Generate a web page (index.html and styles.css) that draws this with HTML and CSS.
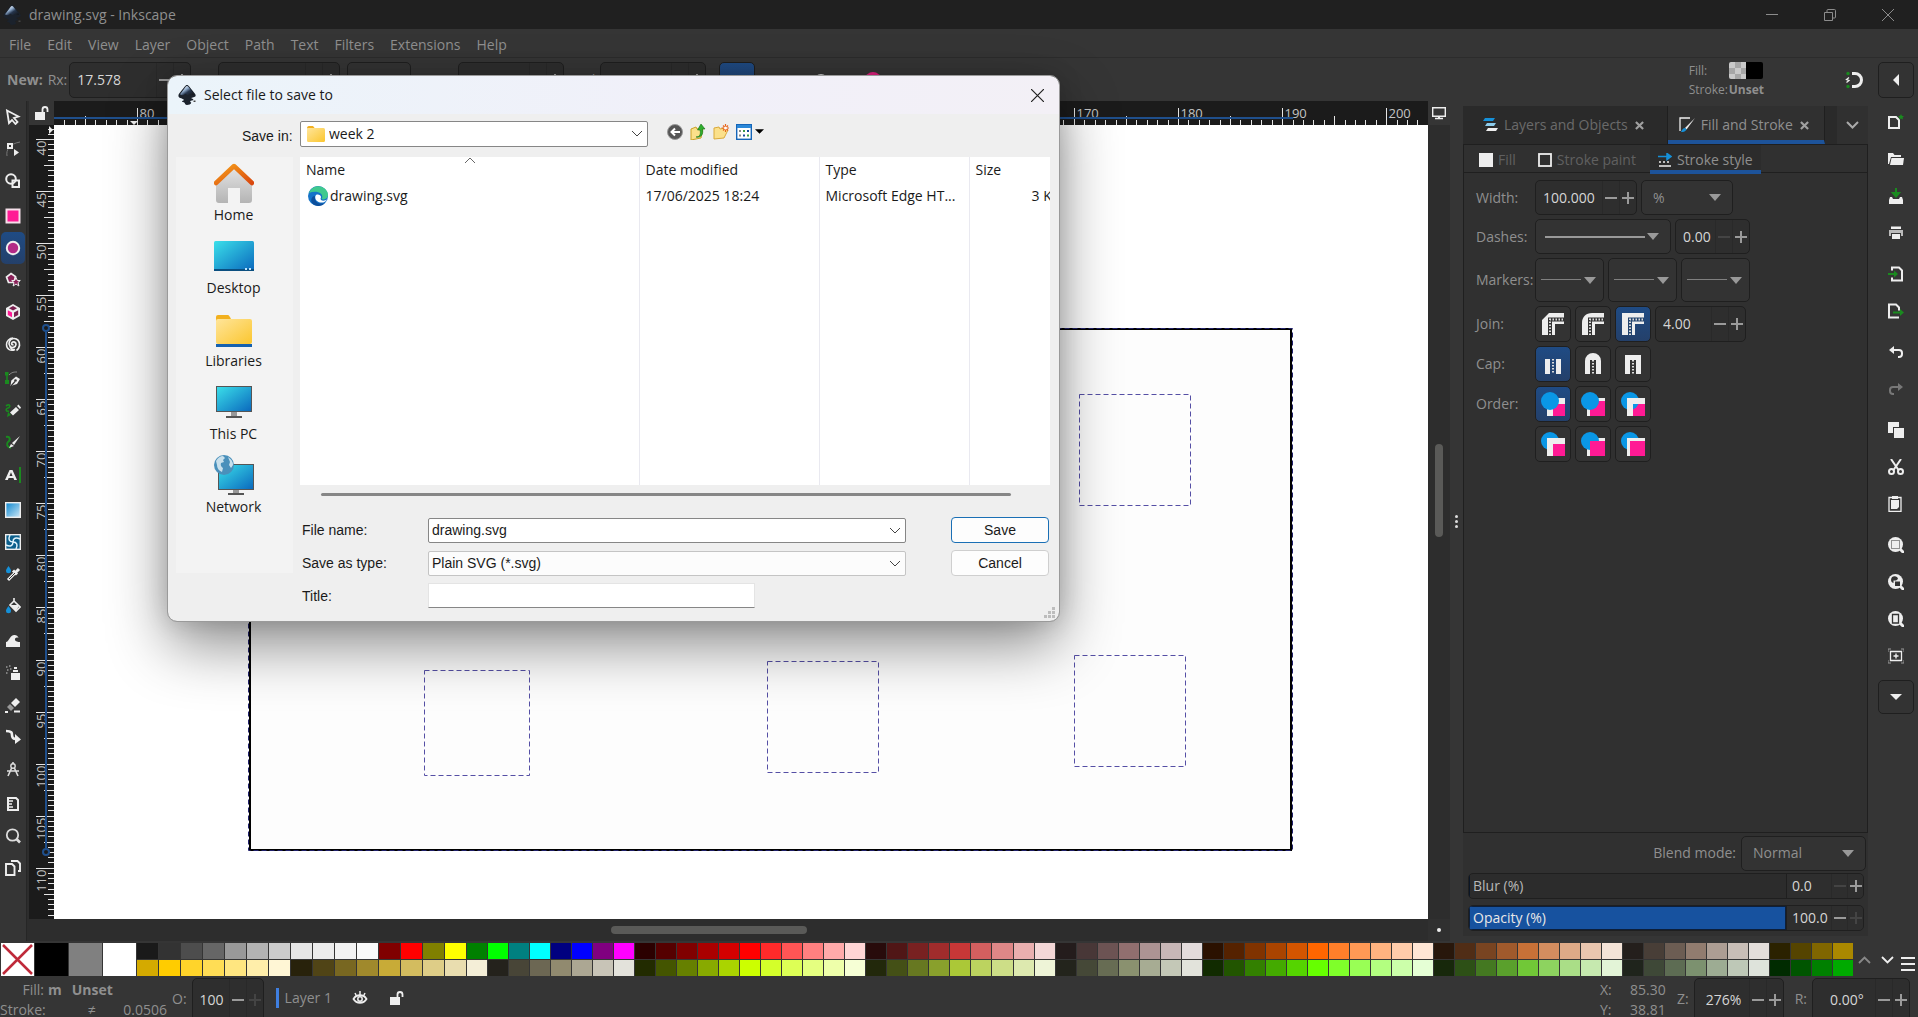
FILE: index.html
```html
<!DOCTYPE html>
<html lang="en">
<head>
<meta charset="utf-8">
<title>drawing.svg - Inkscape</title>
<link rel="stylesheet" href="styles.css">
</head>
<body>
<svg class="defs" width="0" height="0" aria-hidden="true">
  <defs>
    <linearGradient id="screen" x1="0" y1="0" x2="1" y2="1"><stop offset="0" stop-color="#3be0ea"/><stop offset="1" stop-color="#0a68bd"/></linearGradient>
    <linearGradient id="folder" x1="0" y1="0" x2="1" y2="1"><stop offset="0" stop-color="#ffe59a"/><stop offset="1" stop-color="#fbc62f"/></linearGradient>
    <linearGradient id="roof" x1="0" y1="0" x2="1" y2="1"><stop offset="0" stop-color="#f7a01b"/><stop offset="1" stop-color="#d9480f"/></linearGradient>
    <linearGradient id="wall" x1="0" y1="0" x2="0" y2="1"><stop offset="0" stop-color="#e4e4e4"/><stop offset="1" stop-color="#b4b4b4"/></linearGradient>
    <linearGradient id="grad-tool" x1="0" y1="0" x2="1" y2="1"><stop offset="0" stop-color="#0b86cf"/><stop offset="1" stop-color="#cfe9f7"/></linearGradient>
    <linearGradient id="peak" x1="0" y1="0" x2="1" y2="1"><stop offset="0.150" stop-color="#f4f8fd"/><stop offset="0.4" stop-color="#8ba6c6"/><stop offset="0.600" stop-color="#26364e"/><stop offset="1" stop-color="#111"/></linearGradient>
    <symbol id="ink" viewBox="0 0 18 20">
      <path d="M9 0c.9 0 1.500.6 2.200 1.500l5.600 7c1.400 1.700 1 3-.6 3.500l-3 1c.6.9 2.300.8 2.200 1.700-.2.800-2.800.7-3.200 1.500-.3.800 1.300.8 1 1.800-.3 1.300-2.400 2-4.200 2s-1.800-1.300-2.500-2.200c-.7-.7-2.600-.5-2.600-1.500 0-.8 1.800-.7 1.900-1.400C5.900 13.700 2.300 13.500 1 12.200c-1-1-.6-2.500.2-3.700l5.600-7C7.500.6 8.100 0 9 0z" fill="#1b222c"/>
      <path d="M9 1c.6 0 1 .5 1.500 1.100l5.300 6.700c.8 1-1 1.700-2.800.7-1.500-.8-2 .8-3.500.4S7.500 8.500 6.500 9.500s-3.500.8-4 .2 0-1 .4-1.500l4.600-6.100C8 1.500 8.400 1 9 1z" fill="url(#peak)"/>
      <path d="M15.500 15.500h2v1.500h-2z" fill="#444"/>
    </symbol>
    <symbol id="folder-small" viewBox="0 0 18 16">
      <path d="M0 2.500C0 1 .5 0 2 0h4l2 2.500z" fill="#f2b01e"/><rect y="2" width="18" height="14" rx="1.500" fill="url(#folder)"/>
    </symbol>
    <symbol id="lock-open" viewBox="0 0 14 14">
      <path d="M0 6h10v8H0z" fill="#eee"/><path d="M7.500 6V3.500a2.500 2.500 0 0 1 5 0V6" fill="none" stroke="#eee" stroke-width="1.800"/>
    </symbol>
    <symbol id="chev" viewBox="0 0 12 7"><path d="M1 1l5 5 5-5" fill="none" stroke="currentColor" stroke-width="1"/></symbol>
    <symbol id="caret" viewBox="0 0 12 7"><path d="M0 0h12L6 7z" fill="currentColor"/></symbol>
    <symbol id="x-bold" viewBox="0 0 10 10"><path d="M1 1l8 8M9 1L1 9" stroke="currentColor" stroke-width="2.400"/></symbol>
  </defs>
</svg>

<div class="app">
  <header class="titlebar">
    <svg class="ink" viewBox="0 0 18 20"><use href="#ink"/></svg>
    <span class="titlebar-text">drawing.svg - Inkscape</span>
    <div class="window-controls">
      <button aria-label="Minimize"><svg class="i12" viewBox="0 0 12 12"><path d="M0 5.500h12" stroke="#8c8c8c"/></svg></button>
      <button aria-label="Restore"><svg class="i12" viewBox="0 0 12 12"><path d="M.5 3.500h8v8h-8zM3 3V1.500a1 1 0 0 1 1-1h6.500a1 1 0 0 1 1 1V8a1 1 0 0 1-1 1H9" fill="none" stroke="#8c8c8c"/></svg></button>
      <button aria-label="Close"><svg class="i12" viewBox="0 0 12 12"><path d="M0 0l12 12M12 0L0 12" stroke="#8c8c8c"/></svg></button>
    </div>
  </header>

  <nav class="menubar">
    <button>File</button><button>Edit</button><button>View</button><button>Layer</button><button>Object</button><button>Path</button><button>Text</button><button>Filters</button><button>Extensions</button><button>Help</button>
  </nav>

  <div class="toolbar">
    <b>New:</b>
    <label for="rx">Rx:</label>
    <div class="spin spin-wide"><input id="rx" type="text" value="17.578"><button class="minus" aria-label="Decrease Rx"></button><button class="plus" aria-label="Increase Rx"></button></div>
    <label class="lbl-ry" for="ry">Ry:</label>
    <div class="spin spin-wide"><input id="ry" type="text" value="5.335"><button class="minus" aria-label="Decrease Ry"></button><button class="plus" aria-label="Increase Ry"></button></div>
    <div class="combo combo-unit"><select aria-label="Unit"><option>mm</option></select></div>
    <label class="lbl-start" for="start">Start:</label>
    <div class="spin spin-angle"><input id="start" type="text" value="90.000"><button class="minus" aria-label="Decrease start"></button><button class="plus" aria-label="Increase start"></button></div>
    <label class="lbl-end" for="end">End:</label>
    <div class="spin spin-angle"><input id="end" type="text" value="360.000"><button class="minus" aria-label="Decrease end"></button><button class="plus" aria-label="Increase end"></button></div>
    <div class="arc-kinds">
      <button class="sq on" aria-label="Slice"><svg class="i16" viewBox="0 0 16 16"><path d="M8 3l-6 10h12z" fill="#eee"/></svg></button>
      <button class="sq flat" aria-label="Arc"><svg class="i16" viewBox="0 0 16 16"><path d="M8 3l-6 10h12z" fill="#ccc"/></svg></button>
      <button class="sq flat" aria-label="Chord"><svg class="i16" viewBox="0 0 16 16"><circle cx="8" cy="9" r="6" fill="none" stroke="#ccc" stroke-width="2"/></svg></button>
      <button class="sq flat pink" aria-label="Whole ellipse"><svg class="i16" viewBox="0 0 16 16"><circle cx="8" cy="8" r="8" fill="#e0207f"/></svg></button>
    </div>
    <div class="style-box">
      <span>Fill:</span><svg class="style-swatch" viewBox="0 0 34 17"><rect width="17" height="17" fill="#c9c9c9"/><path d="M6 0h6v6H6zM0 6h6v6H0zM12 6h5v6h-5zM6 12h6v5H6z" fill="#a6a6a6"/><rect x="17" width="17" height="17" fill="#000"/></svg>
      <span>Stroke:</span><b>Unset</b>
    </div>
    <button class="snap" aria-label="Snapping"><svg class="i18" viewBox="0 0 18 18"><path d="M7 2.500h3a6.500 6.500 0 0 1 0 13H7" fill="none" stroke="#eee" stroke-width="3"/><circle cx="3" cy="2.500" r="1.700" fill="#1a8a1f"/><circle cx="3" cy="15.500" r="1.700" fill="#1a8a1f"/><path d="M4 6.500L1.500 8.500 4 9.500 1.500 11.500" stroke="#eee" stroke-width="1.300" fill="none"/></svg></button>
    <button class="sq" aria-label="Snap menu"><svg class="tri-left" viewBox="0 0 6 12"><path d="M6 0v12L0 6z" fill="#eee"/></svg></button>
  </div>

  <main class="work">
    <div class="toolbox">
      <button aria-label="Selector"><svg class="i16" viewBox="0 0 16 16"><path d="M2 1.500l11.500 6-4.500 1.500 3.500 4-2 2-3.500-4L4 14z" fill="none" stroke="#eee" stroke-width="1.800"/></svg></button>
      <button aria-label="Node"><svg class="i16" viewBox="0 0 16 16"><path d="M2 15C1 9 4 3 15 1" fill="none" stroke="#777"/><path d="M2 2h6v6H2z" fill="#eee"/><path d="M4 4h2v2H4z" fill="#333"/><path d="M9 8l5 3.500L9 15z" fill="#eee"/></svg></button>
      <button aria-label="Shape builder"><svg class="i16" viewBox="0 0 16 16"><circle cx="6" cy="6" r="4.800" fill="none" stroke="#eee" stroke-width="2"/><path d="M7.500 7.500h6.500v6.500H7.500z" fill="none" stroke="#eee" stroke-width="2"/></svg></button>
      <hr>
      <button aria-label="Rectangle"><svg class="i16" viewBox="0 0 16 16"><rect x="1.500" y="1.500" width="13" height="13" fill="#ff1a94" stroke="#f6dfea" stroke-width="2"/></svg></button>
      <button class="on" aria-label="Ellipse"><svg class="i16" viewBox="0 0 16 16"><circle cx="8" cy="8" r="6.200" fill="#b32a86" stroke="#eee" stroke-width="2"/></svg></button>
      <button aria-label="Star"><svg class="i16" viewBox="0 0 16 16"><path d="M6 1.500l4.500 3-1.500 6H3.500L1.500 5z" fill="#8a2058" stroke="#eee" stroke-width="1.700"/><path d="M11 5.500l1.300 3h3l-2.300 2 .9 3.500-2.900-2-2.900 2 .9-3.500-2.300-2h3z" fill="#8a2058" stroke="#eee"/></svg></button>
      <button aria-label="3D box"><svg class="i16" viewBox="0 0 16 16"><path d="M8 0l7 4v8l-7 4-7-4V4z" fill="#eee"/><path d="M8 2l4 2.300L8 6.500 4 4.300z" fill="#7a2050"/><path d="M2.800 6.200L7 8.500v4.800l-4.200-2.400z" fill="#ff1a94"/><path d="M13.200 6.200L9 8.500v4.800l4.200-2.400z" fill="#7a2050"/></svg></button>
      <button aria-label="Spiral"><svg class="i16" viewBox="0 0 16 16"><path d="M8.500 8.500c-1.500.8-2.500-1-1.500-2 1.500-1.500 4.200-.2 4 2-.3 3-4.200 4-6 1.800C2.800 7.500 4.500 3 8.500 2.500c4-.3 6.500 3 6 7-.3 2-1.500 4-3 5" fill="none" stroke="#eee" stroke-width="1.700"/><path d="M5 10.500c.5 2.500 3 3.500 5 3-4 2-8.500 0-8.500-5 0-3.500 3-6.500 6.500-6.500" fill="none" stroke="#eee" stroke-width="1.500"/></svg></button>
      <hr>
      <button aria-label="Pen"><svg class="i16" viewBox="0 0 16 16"><path d="M2 3v9" stroke="#1a8a1f" stroke-width="1.500"/><path d="M0 1h3.500v3.500H0zM0 9h4v4H0z" fill="#1a8a1f"/><path d="M4 4c3-3 5-3 8-3" fill="none" stroke="#888"/><path d="M5.500 15l.8-5.500L11 5.500l4 2.500-3 5z" fill="#eee"/><path d="M6 15l4-4.500" stroke="#333" stroke-width="1.200"/><circle cx="10.500" cy="9.500" r="1.300" fill="#333"/></svg></button>
      <button aria-label="Pencil"><svg class="i16" viewBox="0 0 16 16"><path d="M1 3c4-3 5 1 2 2s-2 4 1 3" fill="none" stroke="#1a8a1f" stroke-width="1.600"/><path d="M2 14l1-5 3 3z" fill="#1a8a1f"/><path d="M5 9.500L11 4l3 3-6 5.500zM12 3l1.500-1.500 2.500 3L15 6z" fill="#eee"/></svg></button>
      <button aria-label="Calligraphy"><svg class="i16" viewBox="0 0 16 16"><path d="M1 2c4-1 5 3 2 5-2 2-1 5 3 6" fill="none" stroke="#1a8a1f" stroke-width="2"/><path d="M15 1L7 8l2 2z" fill="#eee"/><path d="M4 13l2-4 3 2z" fill="#eee"/></svg></button>
      <button aria-label="Text"><svg class="i16" viewBox="0 0 16 16"><path d="M0 13L4.500 3h3L12 13H9.200l-.8-2H3.600l-.8 2zM4.500 9h3L6 5.200z" fill="#eee"/><path d="M15 0v16" stroke="#1a8a1f" stroke-width="2"/></svg></button>
      <hr>
      <button aria-label="Gradient"><svg class="i16" viewBox="0 0 16 16"><rect x=".7" y=".7" width="14.600" height="14.600" fill="url(#grad-tool)" stroke="#eee" stroke-width="1.400"/></svg></button>
      <button aria-label="Mesh"><svg class="i16" viewBox="0 0 16 16"><rect x=".7" y=".7" width="14.600" height="14.600" fill="#0b5f8c" stroke="#eee" stroke-width="1.400"/><path d="M8 8C4 8 3 5 5 1M8 8c0-4 3-5 7-3M8 8c4 0 5 3 3 7M8 8c0 4-3 5-7 3" fill="none" stroke="#dff3fc" stroke-width="1.500"/></svg></button>
      <button aria-label="Dropper"><svg class="i16" viewBox="0 0 16 16"><path d="M3.500 0C5 2 6 3.500 6 4.700a2.500 2.500 0 0 1-5 0C1 3.500 2 2 3.500 0z" fill="#1590d8"/><path d="M3 14l7-7M8 4.500l4 4M11 6l3-3" stroke="#eee" stroke-width="3"/><path d="M4 13l6-6" stroke="#333"/></svg></button>
      <button aria-label="Paint bucket"><svg class="i16" viewBox="0 0 16 16"><path d="M3.500 8C5 10 6 11.500 6 12.700a2.500 2.500 0 0 1-5 0C1 11.500 2 10 3.500 8z" fill="#1590d8"/><path d="M9 3l6 6-4 4-6-6 4-4V0" fill="none" stroke="#eee" stroke-width="1.600"/><path d="M5.500 7h9L11 13z" fill="#eee"/></svg></button>
      <hr>
      <button aria-label="Tweak"><svg class="i16" viewBox="0 0 16 16"><path d="M1 14V9c3 0 3-6 8-7 2-.3 4 1 4.500 3-2-1-4 0-3.500 2 .5 1.500 3 2 5 2v5z" fill="#eee"/></svg></button>
      <button aria-label="Spray"><svg class="i16" viewBox="0 0 16 16"><path d="M6 8h9v7H6zM8 5h5v2H8zM9 2h3v2H9z" fill="#eee"/><path d="M1 2h1.500M4 1h1.500M2 5h1.500M5 4h1.500M1 8h1.500" stroke="#999" stroke-width="1.500"/></svg></button>
      <button aria-label="Eraser"><svg class="i16" viewBox="0 0 16 16"><path d="M6 6l5-5 4 4-5 5z" fill="#eee"/><path d="M5 7l4 4-3 3-4-4z" fill="#999"/><path d="M0 15h3M9 14.500h6" stroke="#eee" stroke-width="2"/></svg></button>
      <button aria-label="Connector"><svg class="i16" viewBox="0 0 16 16"><path d="M1 2c6 0 6 2 6 4s1 4 4 4" fill="none" stroke="#eee" stroke-width="2.600"/><path d="M10 5l6 5.500L10 15z" fill="#eee"/></svg></button>
      <button aria-label="Path effects"><svg class="i16" viewBox="0 0 16 16"><path d="M8 1v3M8 4L3 15M8 4l5 11M2 10h12" fill="none" stroke="#ddd" stroke-width="1.600"/><circle cx="8" cy="5" r="2.200" fill="#333" stroke="#ddd" stroke-width="1.400"/></svg></button>
      <hr>
      <button aria-label="Measure"><svg class="i16" viewBox="0 0 16 16"><path d="M3 2h8l2 2v10H3z" fill="none" stroke="#eee" stroke-width="2"/><path d="M3 5h5M3 8h4M3 11h5" stroke="#eee" stroke-width="1.300"/></svg></button>
      <button aria-label="Zoom"><svg class="i16" viewBox="0 0 16 16"><circle cx="7.500" cy="7" r="5.700" fill="none" stroke="#ddd" stroke-width="1.800"/><path d="M11.500 11l3.500 3.500" stroke="#ddd" stroke-width="2.600"/></svg></button>
      <button aria-label="Pages"><svg class="i16" viewBox="0 0 16 16"><path d="M6 1h6.500L15 3.500V11h-2M1 4h6l2.500 2.500V15H1z" fill="none" stroke="#eee" stroke-width="1.900"/></svg></button>
    </div>

    <section class="editor">
      <button class="ruler-lock" aria-label="Lock guides"><svg class="i14" viewBox="0 0 14 14"><use href="#lock-open"/></svg></button>
      <svg class="ruler ruler-h" id="ruler-h" role="img" aria-label="Horizontal ruler"></svg>
      <button class="cms" aria-label="Colour management"><svg class="i14" viewBox="0 0 14 14"><path d="M.7 1.700h12.600v8.600H.7z" fill="none" stroke="#eee" stroke-width="1.400"/><path d="M3 12.500h8M6 11h2" stroke="#eee" stroke-width="1.400"/></svg></button>
      <svg class="ruler ruler-v" id="ruler-v" role="img" aria-label="Vertical ruler"></svg>
      <svg class="canvas" role="img" aria-label="Drawing canvas">
        <rect x="196" y="204" width="1041" height="521" fill="#fdfdfd" stroke="#000" stroke-width="2"/>
        <rect class="sel" x="194.500" y="203.500" width="1044" height="522"/>
        <g class="dashed">
          <rect x="1025.500" y="269.500" width="111" height="111"/>
          <rect x="370.500" y="545.500" width="105" height="105"/>
          <rect x="713.500" y="536.500" width="111" height="111"/>
          <rect x="1020.500" y="530.500" width="111" height="111"/>
        </g>
      </svg>
      <div class="vscroll"><i></i></div>
      <div class="hscroll"><i></i></div>
      <div class="corner"><i></i></div>
    </section>

    <div class="splitter"><i></i><i></i><i></i></div>

    <aside class="dock">
      <div class="dock-tabs" role="tablist">
        <button class="dock-tab" role="tab">
          <svg class="i16" viewBox="0 0 16 16"><path d="M3 1h10l-2 3H1z" fill="#1590d8"/><path d="M5 6h9l-2 3H3z" fill="#8ccbea"/><path d="M6 11h10l-2 3H4z" fill="#eee"/></svg>
          Layers and Objects <svg class="i9" viewBox="0 0 10 10"><use href="#x-bold"/></svg></button>
        <button class="dock-tab active" role="tab">
          <svg class="i16" viewBox="0 0 16 16"><path d="M11 1H1v13" fill="none" stroke="#eee" stroke-width="1.300"/><path d="M16 1L6 11l1.500 1.500z" fill="#eee"/><path d="M6 11l1.500 1.500C6 15 4 15 2 15c1-2 2-4 4-4z" fill="#1590d8"/></svg>
          Fill and Stroke <svg class="i9" viewBox="0 0 10 10"><use href="#x-bold"/></svg></button>
        <button class="dock-more" aria-label="More dialogs"><svg width="13" height="8" viewBox="0 0 13 8"><path d="M1 1l5.500 5.500L12 1" fill="none" stroke="#aaa" stroke-width="2"/></svg></button>
      </div>
      <div class="notebook">
        <div class="sub-tabs" role="tablist">
          <button role="tab"><svg class="i14" viewBox="0 0 14 14"><rect width="14" height="14" fill="#eee"/></svg>Fill</button>
          <button role="tab"><svg class="i14" viewBox="0 0 14 14"><rect x="1" y="1" width="12" height="12" fill="none" stroke="#eee" stroke-width="1.800"/></svg>Stroke paint</button>
          <button role="tab" class="active"><svg class="i14" viewBox="0 0 14 14"><path d="M0 3.500h10M9 .5l4 3-4 3z" stroke="#1590d8" stroke-width="1.500" fill="#1590d8"/><path d="M1 9h2M5 9h2M9 9h2M1 13h12" stroke="#eee" stroke-width="1.700"/></svg>Stroke style</button>
        </div>
        <div class="form">
          <label for="width">Width:</label>
          <div class="row row-34">
            <div class="spin w-102"><input id="width" type="text" value="100.000"><button class="minus" aria-label="Decrease width"></button><button class="plus" aria-label="Increase width"></button></div>
            <div class="combo w-92"><select aria-label="Width unit"><option>%</option></select><svg class="caret" viewBox="0 0 12 7"><use href="#caret"/></svg></div>
          </div>
          <label for="dashes">Dashes:</label>
          <div class="row row-34">
            <div class="combo w-136"><select id="dashes"><option label=" "></option></select><svg class="line line-dash" viewBox="0 0 100 2" preserveAspectRatio="none"><path d="M0 1h100" stroke="#999" stroke-width="2"/></svg><svg class="caret" viewBox="0 0 12 7"><use href="#caret"/></svg></div>
            <div class="spin w-75"><input aria-label="Dash offset" type="text" value="0.00"><button class="minus dim" aria-label="Decrease offset"></button><button class="plus" aria-label="Increase offset"></button></div>
          </div>
          <label for="marker-start">Markers:</label>
          <div class="row row-44">
            <div class="combo w-69"><select id="marker-start"><option label=" "></option></select><svg class="line" viewBox="0 0 40 2" preserveAspectRatio="none"><path d="M0 .5h40" stroke="#808080"/></svg><svg class="caret" viewBox="0 0 12 7"><use href="#caret"/></svg></div>
            <div class="combo w-69"><select aria-label="Mid marker"><option label=" "></option></select><svg class="line" viewBox="0 0 40 2" preserveAspectRatio="none"><path d="M0 .5h40" stroke="#808080"/></svg><svg class="caret" viewBox="0 0 12 7"><use href="#caret"/></svg></div>
            <div class="combo w-69"><select aria-label="End marker"><option label=" "></option></select><svg class="line" viewBox="0 0 40 2" preserveAspectRatio="none"><path d="M0 .5h40" stroke="#808080"/></svg><svg class="caret" viewBox="0 0 12 7"><use href="#caret"/></svg></div>
          </div>
          <label for="miter">Join:</label>
          <div class="row row-36">
            <button class="sq" aria-label="Bevel join"><svg class="i22" viewBox="0 0 22 22"><path d="M0 22V7l7-7h15v11h-9v11z" fill="#eee"/><path d="M8 22V6.500h14" fill="none" stroke="#333" stroke-width="4"/><path d="M8 22V6.500h14" fill="none" stroke="#ddd" stroke-width="2" stroke-dasharray="1.500 1.500"/></svg></button>
            <button class="sq" aria-label="Round join"><svg class="i22" viewBox="0 0 22 22"><path d="M0 22V10C0 4 4 0 10 0h12v11h-9v11z" fill="#eee"/><path d="M8 22V6.500h14" fill="none" stroke="#333" stroke-width="4"/><path d="M8 22V6.500h14" fill="none" stroke="#ddd" stroke-width="2" stroke-dasharray="1.500 1.500"/></svg></button>
            <button class="sq on" aria-label="Miter join"><svg class="i22" viewBox="0 0 22 22"><path d="M0 22V0h22v11h-9v11z" fill="#eee"/><path d="M8 22V6.500h14" fill="none" stroke="#24456f" stroke-width="4"/><path d="M8 22V6.500h14" fill="none" stroke="#ddd" stroke-width="2" stroke-dasharray="1.500 1.500"/></svg></button>
            <div class="spin w-91"><input id="miter" type="text" value="4.00"><button class="minus" aria-label="Decrease miter"></button><button class="plus" aria-label="Increase miter"></button></div>
          </div>
          <span>Cap:</span>
          <div class="row row-36">
            <button class="sq on" aria-label="Butt cap"><svg class="i22" viewBox="0 0 22 22"><path d="M3 6h5v15H3zM14 6h5v15h-5z" fill="#eee"/><path d="M11 6v15" stroke="#ddd" stroke-width="2" stroke-dasharray="1.500 1.500"/></svg></button>
            <button class="sq" aria-label="Round cap"><svg class="i22" viewBox="0 0 22 22"><path d="M3 21V8a8 8 0 0 1 16 0v13h-5V7H8v14z" fill="#eee"/><path d="M11 7v14" stroke="#ddd" stroke-width="2" stroke-dasharray="1.500 1.500"/></svg></button>
            <button class="sq" aria-label="Square cap"><svg class="i22" viewBox="0 0 22 22"><path d="M3 21V2h16v19h-5V7H8v14z" fill="#eee"/><path d="M11 7v14" stroke="#ddd" stroke-width="2" stroke-dasharray="1.500 1.500"/></svg></button>
          </div>
          <span>Order:</span>
          <div class="row row-36">
            <button class="sq on" aria-label="Fill, stroke, markers"><svg class="i24" viewBox="0 0 24 24"><path d="M6 6h18v18H6z" fill="#eee"/><path d="M12 12h12v12H12z" fill="#ff1a94"/><circle cx="9" cy="9" r="9" fill="#0a97e6"/></svg></button>
            <button class="sq" aria-label="Stroke, fill, markers"><svg class="i24" viewBox="0 0 24 24"><path d="M6 6h18v18H6z" fill="#eee"/><path d="M9 9h15v15H9z" fill="#ff1a94"/><circle cx="9" cy="9" r="9" fill="#0a97e6"/></svg></button>
            <button class="sq" aria-label="Fill, markers, stroke"><svg class="i24" viewBox="0 0 24 24"><path d="M12 12h12v12H12z" fill="#ff1a94"/><circle cx="9" cy="9" r="9" fill="#0a97e6"/><path d="M6 6h18v6H12v12H6z" fill="#eee"/></svg></button>
          </div>
          <span></span>
          <div class="row row-36">
            <button class="sq" aria-label="Markers, fill, stroke"><svg class="i24" viewBox="0 0 24 24"><circle cx="9" cy="9" r="9" fill="#0a97e6"/><path d="M6 6h18v18H6z" fill="#eee"/><path d="M12 12h12v12H12z" fill="#ff1a94"/></svg></button>
            <button class="sq" aria-label="Stroke, markers, fill"><svg class="i24" viewBox="0 0 24 24"><path d="M6 6h18v18H6z" fill="#eee"/><circle cx="9" cy="9" r="9" fill="#0a97e6"/><path d="M9 9h15v15H9z" fill="#ff1a94"/></svg></button>
            <button class="sq" aria-label="Markers, stroke, fill"><svg class="i24" viewBox="0 0 24 24"><circle cx="9" cy="9" r="9" fill="#0a97e6"/><path d="M6 6h18v18H6z" fill="#eee"/><path d="M9 9h15v15H9z" fill="#ff1a94"/></svg></button>
          </div>
        </div>
      </div>
      <div class="blend">
        <label for="blend">Blend mode:</label>
        <div class="combo w-125"><select id="blend"><option>Normal</option></select><svg class="caret" viewBox="0 0 12 7"><use href="#caret"/></svg></div>
      </div>
      <div class="meter"><label class="meter-bar" for="blur">Blur (%)</label><div class="spin"><input id="blur" type="text" value="0.0"><button class="minus dim" aria-label="Decrease blur"></button><button class="plus" aria-label="Increase blur"></button></div></div>
      <div class="meter"><label class="meter-bar full" for="opacity">Opacity (%)</label><div class="spin"><input id="opacity" type="text" value="100.0"><button class="minus" aria-label="Decrease opacity"></button><button class="plus dim" aria-label="Increase opacity"></button></div></div>
    </aside>

    <div class="commands">
      <button aria-label="New"><svg class="i16" viewBox="0 0 16 16"><path d="M1 3h7l3 3v8H1z" fill="none" stroke="#eee" stroke-width="2"/><path d="M13 0l1 2h2l-1.500 1.500.5 2-2-1-2 1 .5-2L10 2h2z" fill="#1a8a1f"/></svg></button>
      <button aria-label="Open"><svg class="i16" viewBox="0 0 16 16"><path d="M0 2h5l1.500 2H13v2H3L1 13H0z" fill="#eee"/><path d="M3.500 7H16l-1 7H2z" fill="#eee"/></svg></button>
      <button aria-label="Save"><svg class="i16" viewBox="0 0 16 16"><path d="M8 0v6M5 5h6L8 8.500z" stroke="#1a8a1f" stroke-width="2" fill="#1a8a1f"/><path d="M2 9h2l1 2h6l1-2h2l1 3v4H1v-4z" fill="#eee"/></svg></button>
      <button aria-label="Print"><svg class="i16" viewBox="0 0 16 16"><path d="M3 1.500h10V4H3z" fill="#eee"/><path d="M1 5h14v6h-2V8H3v3H1z" fill="#bbb"/><path d="M4 9h8v5H4z" fill="#eee"/></svg></button>
      <hr>
      <button aria-label="Import"><svg class="i16" viewBox="0 0 16 16"><path d="M4 4.500V1.500h7L14 4.500v10H4v-3" fill="none" stroke="#eee" stroke-width="2"/><path d="M0 8h8" stroke="#1a8a1f" stroke-width="2"/><path d="M6 4.500L10 8l-4 3.500z" fill="#1a8a1f"/></svg></button>
      <button aria-label="Export"><svg class="i16" viewBox="0 0 16 16"><path d="M11 14.500H1v-13h7L11 4.500v3" fill="none" stroke="#eee" stroke-width="2"/><path d="M5 9.500h8" stroke="#1a8a1f" stroke-width="2"/><path d="M12 6l4 3.500-4 3.500z" fill="#1a8a1f"/></svg></button>
      <hr>
      <button aria-label="Undo"><svg class="i14" viewBox="0 0 14 14"><path d="M4 5h6a3 3 0 0 1 3 3v1a3 3 0 0 1-3 3H9" fill="none" stroke="#eee" stroke-width="2"/><path d="M5 1v8L0 5z" fill="#eee"/></svg></button>
      <button aria-label="Redo"><svg class="i14" viewBox="0 0 14 14"><path d="M10 5H4a3 3 0 0 0-3 3v1a3 3 0 0 0 3 3h1" fill="none" stroke="#777" stroke-width="2"/><path d="M9 1v8l5-4z" fill="#777"/></svg></button>
      <hr>
      <button aria-label="Copy"><svg class="i16" viewBox="0 0 16 16"><path d="M0 0h11v5H5v6H0z" fill="#eee"/><path d="M6 6h10v10H6z" fill="#eee"/></svg></button>
      <button aria-label="Cut"><svg class="i16" viewBox="0 0 16 16"><path d="M3 0l7.500 11M13 0L5.500 11" stroke="#eee" stroke-width="2"/><circle cx="3.500" cy="12.500" r="2.500" fill="none" stroke="#eee" stroke-width="2"/><circle cx="12.500" cy="12.500" r="2.500" fill="none" stroke="#eee" stroke-width="2"/></svg></button>
      <button aria-label="Paste"><svg class="i16" viewBox="0 0 16 16"><path d="M4 1.500H1v13.800h12V1.500h-3" fill="none" stroke="#eee" stroke-width="1.300"/><path d="M4 0h6v3H4zM3 4h8v7l-2 2H3z" fill="#eee"/></svg></button>
      <hr>
      <button aria-label="Zoom selection"><svg class="i16" viewBox="0 0 16 16"><circle cx="7.500" cy="7.500" r="7.500" fill="#eee"/><path d="M12 12l4 4" stroke="#eee" stroke-width="3"/><path d="M3.500 3.500h8v8h-8z" fill="none" stroke="#333" stroke-dasharray="1 1"/></svg></button>
      <button aria-label="Zoom drawing"><svg class="i16" viewBox="0 0 16 16"><circle cx="7.500" cy="7.500" r="7.500" fill="#eee"/><path d="M12 12l4 4" stroke="#eee" stroke-width="3"/><path d="M10 5a3.500 3.500 0 1 0-4.500 4V6.500H8z" fill="#333"/><path d="M7 7.500h5v4.500H7z" fill="#333"/></svg></button>
      <button aria-label="Zoom page"><svg class="i16" viewBox="0 0 16 16"><circle cx="7.500" cy="7.500" r="7.500" fill="#eee"/><path d="M12 12l4 4" stroke="#eee" stroke-width="3"/><path d="M4.500 3.500h6v8.500h-6z" fill="none" stroke="#333" stroke-width="1.300"/></svg></button>
      <button aria-label="Centre page"><svg class="i16" viewBox="0 0 16 16"><path d="M0 4V1h3M13 1h3v3M16 12v3h-3M3 15H0v-3" fill="none" stroke="#999"/><path d="M2.500 3.500h11v9h-11z" fill="none" stroke="#eee" stroke-width="1.300"/><path d="M8 5.500v5M5.500 8h5" stroke="#eee" stroke-width="1.400"/></svg></button>
      <hr class="tall">
      <button class="sq" aria-label="More commands"><svg class="tri-down" viewBox="0 0 12 6"><path d="M0 0h12L6 6z" fill="#eee"/></svg></button>
    </div>
  </main>

  <div class="palette">
    <div class="palette-fixed">
      <button aria-label="No colour" class="none"><svg viewBox="0 0 33 33"><path d="M2 2l29 29M31 2L2 31" stroke="#bf2a3a" stroke-width="2.500"/></svg></button>
      <button aria-label="Black" class="black"></button>
      <button aria-label="50% grey" class="grey"></button>
      <button aria-label="White" class="white"></button>
    </div>
    <div class="swatches" id="swatches"></div>
    <div class="palette-nav">
      <button aria-label="Scroll up"><svg viewBox="0 0 13 8"><path d="M1 7l5.500-5.500L12 7" fill="none" stroke="#888" stroke-width="1.800"/></svg></button>
      <button aria-label="Scroll down"><svg viewBox="0 0 13 8"><path d="M1 1l5.500 5.500L12 1" fill="none" stroke="#eee" stroke-width="1.800"/></svg></button>
      <button aria-label="Palette menu"><svg viewBox="0 0 14 14"><path d="M0 1h14M0 7h14M0 13h14" stroke="#eee" stroke-width="2"/></svg></button>
    </div>
  </div>

  <footer class="status">
    <div class="status-style">
      <span class="r">Fill:</span><span class="v"><b>m</b><b>Unset</b></span>
      <span class="r">Stroke:</span><span class="v sp"><span>≠</span><span>0.0506</span></span>
    </div>
    <label for="op">O:</label>
    <div class="spin w-72"><input id="op" type="text" value="100"><button class="minus" aria-label="Decrease opacity"></button><button class="plus dim" aria-label="Increase opacity"></button></div>
    <div class="layer"><span>Layer 1</span></div>
    <button class="eye" aria-label="Toggle visibility"><svg class="i16" viewBox="0 0 16 16"><path d="M1.500 9c3-5 10-5 13 0-3 5-10 5-13 0z" fill="none" stroke="#eee" stroke-width="1.800"/><circle cx="8" cy="9" r="2.200" fill="none" stroke="#eee" stroke-width="1.500"/><path d="M8 1v4M3 3l1.500 3M13 3l-1.500 3" stroke="#eee" stroke-width="1.500"/></svg></button>
    <button class="lock" aria-label="Toggle lock"><svg class="i14" viewBox="0 0 14 14"><use href="#lock-open"/></svg></button>
    <div class="coords"><span>X:</span><span>85.30</span><span>Y:</span><span>38.81</span></div>
    <label for="zoom">Z:</label>
    <div class="spin w-90"><input id="zoom" type="text" value="276%"><button class="minus" aria-label="Zoom out"></button><button class="plus" aria-label="Zoom in"></button></div>
    <label for="rot">R:</label>
    <div class="spin w-98"><input id="rot" type="text" value="0.00°"><button class="minus" aria-label="Rotate left"></button><button class="plus" aria-label="Rotate right"></button></div>
  </footer>

  <div class="dialog" role="dialog" aria-label="Select file to save to">
    <div class="dialog-title">
      <svg class="ink" viewBox="0 0 18 20"><use href="#ink"/></svg>
      <span>Select file to save to</span>
      <button aria-label="Close dialog"><svg viewBox="0 0 13 13"><path d="M0 0l13 13M13 0L0 13" stroke="#222" stroke-width="1.200"/></svg></button>
    </div>
    <div class="dialog-where">
      <label for="savein">Save in:</label>
      <div class="drop"><svg class="folder" viewBox="0 0 18 16"><use href="#folder-small"/></svg><select id="savein"><option>week 2</option></select><svg class="chev" viewBox="0 0 12 7"><use href="#chev"/></svg></div>
      <div class="where-tools">
        <button aria-label="Back"><svg class="i16" viewBox="0 0 16 16"><circle cx="8" cy="8" r="7.500" fill="#555" stroke="#999"/><path d="M13 8H5M8 4.500L4.500 8 8 11.500" fill="none" stroke="#fff" stroke-width="2"/></svg></button>
        <button aria-label="Up one level"><svg class="i16" viewBox="0 0 16 16"><path d="M1 5l5-2 1 2 6-1-2 10-10 2z" fill="#fbe08a" stroke="#c9a227"/><path d="M6 13c4 0 5-3 4-7H7.500L11 0l4 5h-2.500c1 5-1 9-6.500 8z" fill="#2fae2f" stroke="#167016" stroke-width=".6"/></svg></button>
        <button aria-label="New folder"><svg class="i16" viewBox="0 0 16 16"><path d="M1 4l5-1 1 2 5-1 3 2-4 8-10 1z" fill="#fbe08a" stroke="#d9a93a"/><path d="M12.500 0v8M8.500 4h8M10 1.500l5 5M15 1.500l-5 5" stroke="#e8641b" stroke-width="1.200"/><circle cx="12.500" cy="4" r="1.500" fill="#fff"/></svg></button>
        <button class="view" aria-label="View menu"><svg class="i16" viewBox="0 0 16 16"><rect x=".7" y=".7" width="14.600" height="14.600" fill="#fff" stroke="#1565b8" stroke-width="1.400"/><path d="M1 2.500h14" stroke="#2b88d8" stroke-width="3"/><path d="M3 7h2M3 11.500h2" stroke="#888" stroke-width="2"/><path d="M7 7h2M11 11.500h2" stroke="#3a9b46" stroke-width="2"/><path d="M11 7h2M7 11.500h2" stroke="#164a9b" stroke-width="2"/></svg><svg class="view-caret" viewBox="0 0 10 5"><path d="M0 0h10L5 5z"/></svg></button>
      </div>
    </div>
    <div class="dialog-main">
      <nav class="places">
        <button><svg viewBox="0 0 40 40"><path d="M2 20L20 4l18 16v17a3 3 0 0 1-3 3h-9V25H14v15H5a3 3 0 0 1-3-3z" fill="url(#wall)"/><path d="M2 20L20 3l18 17" fill="none" stroke="url(#roof)" stroke-width="4.500" stroke-linecap="round" stroke-linejoin="round"/></svg>Home</button>
        <button><svg viewBox="0 0 40 40"><rect y="5" width="40" height="30" rx="1.500" fill="url(#screen)"/><path d="M0 33h40v2H0z" fill="#0b4f80"/><path d="M31 33h2M35 33h2" stroke="#bfe6ff" stroke-width="2"/></svg>Desktop</button>
        <button><svg viewBox="0 0 40 40"><path d="M2 13V8q0-2 2-2h10q1 0 3 4v3z" fill="#f2b01e"/><rect x="2" y="10" width="36" height="25" rx="2" fill="url(#folder)"/><path d="M2 35h36v3H2z" fill="#1561b0"/></svg>Libraries</button>
        <button><svg viewBox="0 0 40 40"><path d="M17 29h6v6h-6z" fill="#999"/><path d="M12 34h16v2H12z" fill="#555"/><rect x="2.500" y="4.500" width="35" height="25" fill="url(#screen)" stroke="#555"/></svg>This PC</button>
        <button><svg viewBox="0 0 40 40"><path d="M19 34h6v5h-6z" fill="#999"/><path d="M14 38h16v2H14z" fill="#555"/><rect x="4.500" y="9.500" width="35" height="25" fill="url(#screen)" stroke="#555"/><circle cx="10" cy="10" r="10" fill="#4a90bb"/><path d="M2 6q3-5 7-5l2 2-2 2 1 2-3 1q-1 3 2 5l-1 4q-5-2-5-7zM14 2q5 3 5 8l-2 3-2-3 1-3z" fill="#c9e0ec"/></svg>Network</button>
      </nav>
      <div class="files">
        <div class="files-pane">
          <table>
            <colgroup><col class="c-name"><col class="c-date"><col class="c-type"><col class="c-size"></colgroup>
            <thead><tr><th>Name<svg class="sort" viewBox="0 0 12 7"><path d="M1 6l5-5 5 5" fill="none" stroke="#666"/></svg></th><th>Date modified</th><th>Type</th><th>Size</th></tr></thead>
            <tbody>
              <tr><td><span class="file"><svg viewBox="0 0 20 20"><circle cx="10" cy="10" r="10" fill="#1473c8"/><path d="M1 7C3 1 9-1 14 1c5 2 7 7 5.500 10-1 2-4 3-6 2 2-3 0-6-4-7-3-.5-6 0-8.500 1z" fill="#3fc98e"/><path d="M7 10c-1 6 4 9 10 7-3 4-10 4-13 0-2-3 0-7 3-7z" fill="#0d4f9c"/><path d="M8 9c2-1 5 0 5 2 0 1-1 1.500 0 3 2 1.500 5 .5 6-1-1 3-4 4-7 3.500-4-.8-6-5-4-7.500z" fill="#fff"/></svg>drawing.svg</span></td><td>17/06/2025 18:24</td><td>Microsoft Edge HT...</td><td class="num">3 KB</td></tr>
              <tr class="rest" aria-hidden="true"><td></td><td></td><td></td><td></td></tr>
            </tbody>
          </table>
        </div>
        <div class="files-scroll"><i></i></div>
        <div class="fields">
          <label for="fname">File name:</label>
          <div class="drop"><input id="fname" type="text" value="drawing.svg"><svg class="chev" viewBox="0 0 12 7"><use href="#chev"/></svg></div>
          <button class="push default">Save</button>
          <label for="ftype">Save as type:</label>
          <div class="drop soft"><select id="ftype"><option>Plain SVG (*.svg)</option></select><svg class="chev" viewBox="0 0 12 7"><use href="#chev"/></svg></div>
          <button class="push">Cancel</button>
          <label for="ftitle">Title:</label>
          <input id="ftitle" class="title-input" type="text">
        </div>
      </div>
    </div>
    <svg class="grip" viewBox="0 0 11 11"><path d="M8 0h3v3H8zM4 4h3v3H4zM8 4h3v3H8zM0 8h3v3H0zM4 8h3v3H4zM8 8h3v3H8z" fill="#bdbdbd"/></svg>
  </div>
</div>
<script src="script.js"></script>
</body>
</html>
```

FILE: styles.css
```css
* { box-sizing: border-box; }

body {
  margin: 0;
  background: #353535;
  color: #8f8f8f;
  font: 14px/20px "Open Sans", "Noto Sans", sans-serif;
}

button, input, select { font: inherit; color: inherit; margin: 0; padding: 0; border: 0; background: none; outline: 0; }
button { display: flex; align-items: center; justify-content: center; }
select { appearance: none; }
input { min-width: 0; }
svg { display: block; flex: none; }
hr { margin: 0; border: 0; width: 100%; }
.defs { position: absolute; }

.i9 { width: 9px; height: 9px; }
.i12 { width: 12px; height: 12px; }
.i14 { width: 14px; height: 14px; }
.i16 { width: 16px; height: 16px; }
.i18 { width: 18px; height: 18px; }
.i22 { width: 22px; height: 22px; }
.i24 { width: 24px; height: 24px; }
.ink { width: 18px; height: 20px; }

.app { display: flex; flex-direction: column; height: 100vh; overflow: hidden; position: relative; }

/* Title bar and menus */
.titlebar { display: flex; align-items: center; height: 29px; padding: 0 1px 0 3px; background: #202020; flex: none; }
.titlebar-text { margin-left: 8px; flex: 1; }
.window-controls { display: flex; }
.window-controls button { width: 58px; height: 28px; }

.menubar { display: flex; gap: 16px; height: 29px; padding: 3px 9px 0; border-bottom: 1px solid #2c2c2c; flex: none; }

/* Shared controls */
.spin { display: flex; border: 1px solid #1f1f1f; border-radius: 5px; background: #2e2e2e; overflow: hidden; }
.spin input { flex: 1; width: 0; padding-left: 7px; color: #d6d6d6; }
.spin button { width: 17px; border-left: 1px solid #292929; color: #9a9a9a; display: grid; place-items: center; }
.spin button::before, .spin .plus::after { content: ""; grid-area: 1 / 1; width: 12px; height: 2px; background: currentColor; }
.spin .plus::after { width: 2px; height: 12px; }
.spin .dim { color: #444; }

.combo { display: grid; grid-template-columns: 1fr auto; align-items: center; border: 1px solid #1f1f1f; border-radius: 5px; background: #333; }
.combo select { grid-area: 1 / 1 / 2 / 3; height: 100%; width: 100%; padding-left: 11px; }
.combo .caret { grid-area: 1 / 2; width: 12px; height: 7px; margin-right: 11px; color: #999; pointer-events: none; }
.combo .line { grid-area: 1 / 1; width: 40px; height: 2px; margin-left: 5px; pointer-events: none; }
.combo .line-dash { width: 100px; margin-left: 9px; }
.w-69 .caret { margin-right: 7px; }

.sq { width: 36px; height: 36px; border: 1px solid #1f1f1f; border-radius: 5px; background: #333; flex: none; }
.sq.on { background: linear-gradient(#1f4b84, #24406a); }
.sq.flat { background: none; border-color: transparent; }

.w-69 { width: 69px; }
.w-72 { width: 72px; }
.w-75 { width: 75px; }
.w-90 { width: 90px; }
.w-91 { width: 91px; }
.w-92 { width: 92px; }
.w-98 { width: 98px; }
.w-102 { width: 102px; }
.w-125 { width: 125px; }
.w-136 { width: 136px; }

/* Tool controls bar */
.toolbar { display: flex; align-items: center; height: 43px; padding: 0 4px 0 7px; flex: none; }
.toolbar > label { margin-left: 5px; }
.toolbar .spin, .toolbar .combo { height: 36px; margin-left: 2px; }
.spin-wide { width: 122px; }
.spin-angle { width: 106px; }
.toolbar .combo-unit { width: 64px; margin-left: 7px; }
.toolbar .lbl-start { width: 34px; margin-left: 11px; }
.toolbar .lbl-end { width: 28px; margin-left: 6px; }
.toolbar .lbl-ry { width: 20px; }
.arc-kinds { display: flex; gap: 6px; margin-left: 13px; flex: 1; }
.arc-kinds .pink { margin-left: 10px; }
.style-box { display: grid; grid-template-columns: 40px auto; row-gap: 2px; align-items: center; font-size: 12px; line-height: 17px; margin-right: 81px; }
.style-swatch { width: 34px; height: 17px; border-radius: 2px; }
.snap { margin-right: 15px; }
.tri-left { width: 6px; height: 12px; }
.tri-down { width: 12px; height: 6px; }

/* Work area */
.work { display: flex; flex: 1; min-height: 0; }
.toolbox { width: 27px; border-right: 1px solid #262626; flex: none; overflow: hidden; }
.toolbox button { width: 24px; height: 32px; margin-left: 1px; border-radius: 5px; }
.toolbox .on { background: linear-gradient(#1f4b84, #24406a); }
.toolbox hr { height: 3px; }

.editor { flex: 1; min-width: 0; display: grid; grid-template: 24px 1fr 22px / 25px 1fr 22px; padding-left: 2px; background: #2d2d2d; }
.ruler-lock, .cms { background: #353535; }
.ruler { width: 100%; height: 100%; background: #1b1b1b; overflow: hidden; }
.ruler line { stroke: #e6e6e6; shape-rendering: crispEdges; }
.ruler text { fill: #c4c4c4; font-size: 13px; }
.ruler .extent { stroke: #1f4f8c; stroke-width: 2; fill: none; }
.ruler .cursor { fill: #eee; }
.canvas { width: 100%; height: 100%; background: #fff; overflow: hidden; }
.canvas .sel { fill: none; stroke: #20206a; stroke-dasharray: 5 3; }
.canvas .dashed rect { fill: none; stroke: #554fa5; stroke-dasharray: 5 3; }
.vscroll i { display: block; width: 8px; height: 93px; margin: 319px auto 0 7px; border-radius: 4px; background: #5a5a58; }
.hscroll { grid-column: 1 / 3; }
.hscroll i { display: block; width: 196px; height: 8px; margin: 7px 0 0 582px; border-radius: 4px; background: #5a5a58; }
.corner { background: #303030; display: grid; place-items: center; }
.corner i { width: 4px; height: 4px; border-radius: 2px; background: #eee; }

.splitter { width: 13px; flex: none; display: flex; flex-direction: column; align-items: center; justify-content: center; gap: 2px; }
.splitter i { width: 3px; height: 3px; border-radius: 2px; background: #ddd; }

/* Dock */
.dock { width: 405px; flex: none; display: flex; flex-direction: column; padding-top: 5px; margin-bottom: 5px; background: #303030; background-clip: content-box; }
.dock-tabs { display: flex; height: 38px; background: #2a2a2a; flex: none; }
.dock-tab { gap: 6px; padding: 0 23px 0 19px; color: #6a6a6a; border-right: 1px solid #1f1f1f; }
.dock-tab svg:last-child { color: #a0a0a0; margin-left: 1px; }
.dock-tab.active { padding: 4px 15px 0 11px; color: #8f8f8f; background: #303030; border-bottom: 4px solid #1d539a; }
.dock-more { width: 31px; margin-left: auto; background: #303030; }
.notebook { flex: 1; border: 1px solid #1f1f1f; }
.sub-tabs { display: flex; height: 28px; border-bottom: 1px solid #1f1f1f; padding-left: 15px; }
.sub-tabs button { gap: 5px; height: 29px; color: #606060; margin-right: 22px; }
.sub-tabs .active { color: #8f8f8f; border-bottom: 4px solid #1d539a; padding: 4px 8px 0; margin-left: -8px; background: #2c2c2c; }
.form { display: grid; grid-template-columns: 59px auto; gap: 4px 0; padding: 7px 12px 0; justify-content: start; align-items: center; }
.row { display: flex; gap: 4px; }
.row > * { height: 100%; }
.row-34 { height: 35px; }
.row-44 { height: 44px; }
.row-36 { height: 36px; }
.blend { display: flex; align-items: center; justify-content: flex-end; gap: 5px; height: 40px; padding-right: 2px; flex: none; }
.blend .combo { height: 35px; }
.meter { display: flex; height: 26px; margin: 0 4px 6px 5px; border: 1px solid #1f1f1f; border-radius: 5px; overflow: hidden; flex: none; background: #2c2c2c; }
.meter + .meter { margin-bottom: 5px; }
.meter-bar { flex: 1; padding: 2px 0 0 3px; border-left: 1px solid #0b1626; color: #b8b8b8; }
.meter-bar.full { background: #17529f; border: 1px solid #0d1f3a; padding: 1px 0 0 3px; color: #e8e8e8; }
.meter .spin { width: 77px; border: 0; border-left: 1px solid #1f1f1f; border-radius: 0; }
.meter .spin button { width: 16px; }
.meter .spin input { padding-left: 5px; }

/* Command bar */
.commands { width: 50px; flex: none; display: flex; flex-direction: column; align-items: center; padding: 2px 0 0 6px; }
.commands button { width: 36px; height: 37px; flex: none; }
.commands .sq { height: 34px; }
.commands hr { height: 4px; flex: none; }
.commands .tall { height: 6px; }

/* Palette */
.palette { display: flex; height: 33px; margin-top: 2px; padding-left: 1px; flex: none; }
.palette-fixed { display: flex; gap: 1px; }
.palette-fixed button { width: 33px; height: 33px; }
.palette-fixed svg { width: 33px; height: 33px; }
.none, .white { background: #fff; }
.black { background: #000; }
.grey { background: #808080; }
.swatches { flex: 1; display: grid; grid-template-columns: repeat(15, 22fr) repeat(66, 21fr); grid-template-rows: 16px 16px; row-gap: 1px; }
.swatches button { border-left: 1px solid #353535; background-clip: padding-box; }
.palette-nav { display: flex; width: 65px; align-items: center; padding-left: 5px; gap: 10px; }
.palette-nav svg { width: 13px; height: 8px; }
.palette-nav button:last-child svg { width: 14px; height: 14px; }
.palette-nav button:last-child { margin-left: -3px; padding-top: 8px; }

/* Status bar */
.status { display: flex; align-items: center; height: 41px; flex: none; overflow: hidden; padding-right: 8px; }
.status .spin { height: 44px; align-self: flex-start; margin-top: 2px; flex: none; }
.status label { padding-top: 4px; }
.status-style { display: grid; grid-template-columns: 44px 123px; gap: 0 4px; align-self: flex-start; padding-top: 4px; width: 172px; flex: none; }
.status-style .r { text-align: right; }
.status-style .v { display: flex; gap: 10px; }
.status-style .sp { justify-content: space-between; padding: 0 4px 0 40px; }
.status .w-72 { margin-left: 5px; }
.layer { margin: 3px 0 0 12px; border-left: 3px solid #3f7fe0; padding-left: 6px; width: 76px; }
.eye { margin-top: 2px; }
.lock { margin: 2px 0 0 22px; }
.coords { margin-left: auto; display: grid; grid-template-columns: 30px 34px; align-self: flex-start; padding-top: 4px; margin-right: 13px; }
.status .w-90 { margin: 2px 11px 0 5px; }
.status .w-98 { margin-left: 5px; }
.status .w-98 input { padding-left: 17px; }
.status .w-90 input { padding-left: 11px; }

/* Save dialog */
.dialog {
  position: absolute; left: 168px; top: 76px; width: 891px; height: 545px;
  display: flex; flex-direction: column;
  background: #efefef; color: #1a1a1a;
  border-radius: 9px; outline: 1px solid #9a9a9a;
  box-shadow: 0 24px 60px rgba(0, 0, 0, .45), 0 0 24px rgba(0, 0, 0, .15);
  overflow: hidden;
}
.dialog-title { display: flex; align-items: center; height: 38px; padding: 0 15px 0 10px; background: linear-gradient(90deg, #ebf4fa, #f1f0f9 60%, #f3f0f6); }
.dialog-title span { flex: 1; margin-left: 8px; }
.dialog-title button svg { width: 13px; height: 13px; }
.dialog-where { display: flex; align-items: center; height: 43px; padding-left: 74px; font: 14px/20px "Liberation Sans", sans-serif; }
.dialog-where label { width: 58px; }
.dialog-where .drop { width: 348px; margin-bottom: 4px; font-family: "Open Sans", sans-serif; }
.drop { display: grid; grid-template-columns: 1fr auto; align-items: center; height: 26px; background: #fff; border: 1px solid #868686; border-radius: 2px; }
.drop input, .drop select { grid-area: 1 / 1 / 2 / 3; height: 100%; width: 100%; padding-left: 3px; }
.drop .folder { grid-area: 1 / 1; width: 18px; height: 16px; margin-left: 6px; pointer-events: none; }
.drop .folder + select { padding-left: 28px; }
.drop .chev { grid-area: 1 / 2; width: 12px; height: 7px; margin-right: 4px; color: #444; pointer-events: none; }
.drop.soft { background: #fcfcfc; border-color: #c4c4c4; }
.where-tools { display: flex; gap: 7px; margin: 0 0 8px 19px; }
.view { gap: 3px; }
.view-caret { width: 9px; height: 5px; }
.dialog-main { flex: 1; display: flex; padding: 0 9px 0 8px; }
.places { width: 117px; height: 416px; background: #f3f3f3; display: flex; flex-direction: column; padding-top: 6px; }
.places button { flex-direction: column; justify-content: flex-start; height: 73px; gap: 2px; width: 115px; }
.places svg { width: 40px; height: 40px; }
.files { flex: 1; min-width: 0; margin-left: 7px; display: flex; flex-direction: column; }
.files-pane { height: 328px; background: #fff; overflow: hidden; }
.files table { width: 800px; height: 328px; table-layout: fixed; border-collapse: collapse; }
.c-name { width: 339px; }
.c-date { width: 180px; }
.c-type { width: 150px; }
.files tr { height: 26px; }
.files .rest { height: auto; }
.files th, .files td { padding: 0 0 0 6px; text-align: left; font-weight: 400; border-right: 1px solid #e9e9f0; white-space: nowrap; }
.files th { position: relative; }
.sort { position: absolute; left: 164px; top: 0; width: 12px; height: 7px; }
.file { display: flex; align-items: center; gap: 2px; }
.file svg { width: 20px; height: 20px; margin-left: 2px; }
.files .num { text-align: left; padding-left: 62px; }
.files-scroll { height: 32px; padding: 8px 39px 0 21px; }
.files-scroll i { display: block; height: 3px; border-radius: 2px; background: #868686; }
.fields { display: grid; grid-template-columns: 126px 478px 98px; column-gap: 0; row-gap: 7px; font: 14px/20px "Liberation Sans", sans-serif; align-items: center; padding-left: 2px; }
.fields .drop { width: 478px; height: 25px; }
.fields .push { width: 98px; height: 26px; margin-left: 45px; background: #fdfdfd; border: 1px solid #cfcfcf; border-radius: 4px; }
.fields .default { border-color: #1a6fb5; }
.fields .title-input { width: 327px; height: 25px; background: #fff; border: 1px solid #e4e4e4; border-bottom-color: #868686; }
.grip { position: absolute; right: 4px; bottom: 3px; width: 11px; height: 11px; }
```

FILE: script.js
```js
const NS = 'http://www.w3.org/2000/svg';

function add(parent, name, attrs, text) {
  const el = document.createElementNS(NS, name);
  for (const key in attrs) el.setAttribute(key, attrs[key]);
  if (text !== undefined) el.textContent = text;
  parent.appendChild(el);
  return el;
}

/* Horizontal ruler: one tick per unit, label every ten units. */
const h = document.getElementById('ruler-h');
const unit = 10.41;
for (let n = 73; n <= 210; n++) {
  const x = Math.round(83 + (n - 80) * unit) + 0.5;
  if (x < 0) continue;
  const top = n % 10 === 0 ? 7 : n % 5 === 0 ? 15 : 19;
  add(h, 'line', { x1: x, x2: x, y1: top, y2: 24 });
  if (n % 10 === 0) add(h, 'text', { x: x + 2, y: 17 }, n);
}
add(h, 'path', { class: 'extent', d: 'M0 17H1239' });
add(h, 'path', { class: 'cursor', d: 'M76 20h8l-4 4z' });

/* Vertical ruler: ticks at half units, label every five units. */
const v = document.getElementById('ruler-v');
for (let k = 77; k <= 240; k++) {
  const y = Math.round(14 + (k / 2 - 40) * unit) + 0.5;
  const left = k % 10 === 0 ? 7 : k % 5 === 0 ? 15 : 19;
  add(v, 'line', { x1: left, x2: 25, y1: y, y2: y });
  if (k % 10 === 0) {
    add(v, 'text', { transform: `translate(17 ${y + 1}) rotate(-90)`, 'text-anchor': 'end' }, k / 2);
  }
}
add(v, 'path', { class: 'extent', d: 'M17 207V723' });
add(v, 'circle', { class: 'extent', cx: 17, cy: 203, r: 3 });
add(v, 'circle', { class: 'extent', cx: 17, cy: 727, r: 3 });
add(v, 'path', { class: 'cursor', d: 'M20 1v8l4-4z' });

/* Palette, two rows of colours. */
const rows = [
  '1a1a1a 333333 4d4d4d 666666 999999 b3b3b3 cccccc e6e6e6 ececec f2f2f2 f9f9f9 800000 ff0000 808000 ffff00 008000 00ff00 008080 00ffff 000080 0000ff 800080 ff00ff ' +
  '2b0000 550000 800000 aa0000 d40000 ff0000 ff2a2a ff5555 ff8080 ffaaaa ffd5d5 280b0b 501616 782121 a02c2c c83737 d35f5f de8787 e9afaf f4d7d7 241c1c 483737 6c5353 916f6f ac9393 c8b7b7 e3dbdb ' +
  '2b1100 552200 803300 aa4400 d45500 ff6600 ff7f2a ff9955 ffb380 ffccaa ffe6d5 28170b 502d16 784421 a05a2c c87137 d38d5f deaa87 e9c6af f4e3d7 241f1c 483e37 6c5d53 917c6f ac9d93 c8beb7 e3dedb 2b2200 554400 806600 aa8800',
  'd4aa00 ffcc00 ffd42a ffdd55 ffe680 ffeeaa fff6d5 28220b 504416 786721 a0892c c8ab37 d3bc5f decd87 e9ddaf f4eed7 24221c 484537 6c6753 918a6f aca793 c8c4b7 e3e2db ' +
  '222b00 445500 668000 88aa00 aad400 ccff00 d4ff2a ddff55 e5ff80 eeffaa f6ffd5 22280b 445016 677821 89a02c abc837 bcd35f cdde87 dde9af eef4d7 23241c 454837 676c53 8a916f a7ac93 c4c8b7 e2e3db ' +
  '112b00 225500 338000 44aa00 55d400 66ff00 7fff2a 99ff55 b3ff80 ccffaa e5ffd5 17280b 2d5016 447821 5aa02c 71c837 8dd35f aade87 c6e9af e3f4d7 1f241c 3e4837 5d6c53 7c916f 9dac93 bec8b7 dee3db 002b00 005500 008000 00aa00'
];
const swatches = document.getElementById('swatches');
for (const row of rows) {
  for (const hex of row.split(' ')) {
    const b = document.createElement('button');
    b.style.backgroundColor = '#' + hex;
    b.setAttribute('aria-label', '#' + hex);
    swatches.appendChild(b);
  }
}
```
